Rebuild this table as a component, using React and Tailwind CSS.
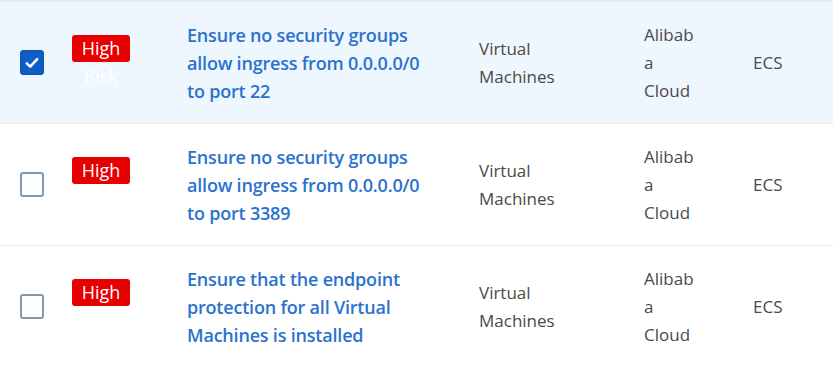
import React from "react";

const rows = [
  {
    checked: true,
    title: "Ensure no security groups allow ingress from 0.0.0.0/0 to port 22",
  },
  {
    checked: false,
    title: "Ensure no security groups allow ingress from 0.0.0.0/0 to port 3389",
  },
  {
    checked: false,
    title: "Ensure that the endpoint protection for all Virtual Machines is installed",
  },
];

const Checkbox = ({ checked }) =>
  checked ? (
    <div className="w-[24px] h-[25px] rounded-[3px] bg-[#0b5fc6] border border-[#1b4f9c] flex items-center justify-center">
      <svg width="16" height="16" viewBox="0 0 16 16" fill="none">
        <path d="M2.8 8.4l3.4 3.2 7-7.4" stroke="white" strokeWidth="2.6" strokeLinecap="round" strokeLinejoin="round" />
      </svg>
    </div>
  ) : (
    <div className="w-[24px] h-[25px] rounded-[3px] bg-white border-2 border-[#8198ae]" />
  );

export default function App() {
  return (
    <div
      className="w-[833px] h-[365px] overflow-hidden bg-white border-t-2 border-[#e6e9ec] leading-[28px]"
      style={{ fontFamily: '"Open Sans", "Noto Sans", sans-serif' }}
    >
      {rows.map((row, i) => (
        <div
          key={i}
          className={`flex items-center h-[122px] shrink-0 border-b border-[#ececec] ${row.checked ? "bg-[#eef6fe]" : "bg-white"}`}
        >
          <div className="w-[72px] pl-[20px] flex items-center">
            <Checkbox checked={row.checked} />
          </div>
          <div className="w-[115px] flex items-center">
            <div className="w-[58px] text-center text-white leading-[28px] text-[18px]">
              <div className="bg-[#e60000] rounded-[3px] h-[27px] leading-[27px]">High</div>
              <div>Risk</div>
            </div>
          </div>
          <div className="w-[292px]">
            <div className="w-[246px] text-[#2b72cf] font-semibold text-[18px] tracking-[-0.2px]">{row.title}</div>
          </div>
          <div className="w-[165px] text-[#4a4a4a] text-[17px]">
            Virtual
            <br />
            Machines
          </div>
          <div className="w-[109px] text-[#4a4a4a] text-[17px]">
            <div className="w-[55px] break-words">Alibaba Cloud</div>
          </div>
          <div className="text-[#4a4a4a] text-[17px]">ECS</div>
        </div>
      ))}
    </div>
  );
}
